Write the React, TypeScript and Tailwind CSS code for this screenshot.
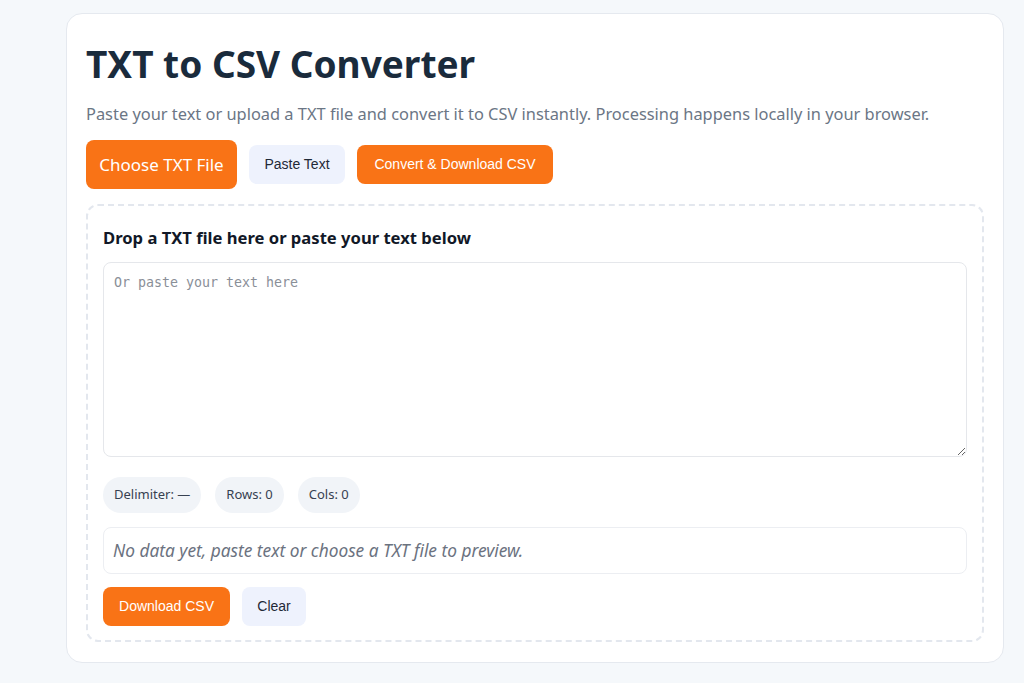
import { useState } from "react";

export default function App() {
  const [text, setText] = useState("");

  const ui = { fontFamily: '"Noto Sans", "Open Sans", sans-serif' };
  const arial = { fontFamily: '"Liberation Sans", Arial, sans-serif' };

  return (
    <div className="min-h-[683px] bg-[#f5f8fb] pt-[13px] pl-[66px] pr-[20px] pb-[20px]" style={ui}>
      <div className="w-[938px] rounded-2xl border border-[#e5e9ef] bg-white px-[19px] pt-[26px] pb-5">
        <h1 className="text-[37px] font-bold leading-[48px] text-[#1a2b3c]">TXT to CSV Converter</h1>

        <p className="mt-[14px] text-[16.4px] leading-6 text-[#6b7685]">
          Paste your text or upload a TXT file and convert it to CSV instantly. Processing happens locally in your browser.
        </p>

        <div className="mt-[14px] flex items-center gap-3">
          <label className="flex h-[49px] w-[151px] cursor-pointer items-center justify-center rounded-lg bg-[#f97316] text-[17px] text-white">
            Choose TXT File
          </label>
          <button
            className="h-[39px] w-[96px] rounded-lg bg-[#eef2fd] text-[14px] text-[#1f2937]"
            style={arial}
          >
            Paste Text
          </button>
          <button
            className="h-[39px] w-[196px] rounded-lg bg-[#f97316] text-[14px] text-white"
            style={arial}
          >
            Convert &amp; Download CSV
          </button>
        </div>

        <div className="mt-[15px] rounded-xl border-2 border-dashed border-[#e3e7ee] px-[15px] pt-[20px] pb-[14px]">
          <h2 className="text-[16.6px] font-bold leading-6 text-[#111827]">
            Drop a TXT file here or paste your text below
          </h2>

          <textarea
            value={text}
            onChange={(e) => setText(e.target.value)}
            placeholder="Or paste your text here"
            className="mt-3 block h-[195px] w-full rounded-lg border border-[#e5e7eb] px-[10px] py-[10px] text-[13.3px] leading-5 placeholder:text-[#8a8f98] focus:outline-none"
            style={{ fontFamily: '"DejaVu Sans Mono", monospace' }}
          />

          <div className="mt-5 flex gap-[14px]">
            <span className="flex h-9 items-center rounded-full bg-[#f1f4f8] px-[11px] text-[13px] text-[#374151]">Delimiter: —</span>
            <span className="flex h-9 items-center rounded-full bg-[#f1f4f8] px-[11px] text-[13px] text-[#374151]">Rows: 0</span>
            <span className="flex h-9 items-center rounded-full bg-[#f1f4f8] px-[11px] text-[13px] text-[#374151]">Cols: 0</span>
          </div>

          <div className="mt-[14px] flex h-[47px] items-center rounded-lg border border-[#eceef2] px-[9px] text-[17.3px] italic text-[#6b7280]">
            No data yet, paste text or choose a TXT file to preview.
          </div>

          <div className="mt-[13px] flex gap-3">
            <button className="h-[39px] w-[127px] rounded-lg bg-[#f97316] text-[14px] text-white" style={arial}>
              Download CSV
            </button>
            <button className="h-[39px] w-[64px] rounded-lg bg-[#eef2fd] text-[14px] text-[#1f2937]" style={arial}>
              Clear
            </button>
          </div>
        </div>
      </div>
    </div>
  );
}
